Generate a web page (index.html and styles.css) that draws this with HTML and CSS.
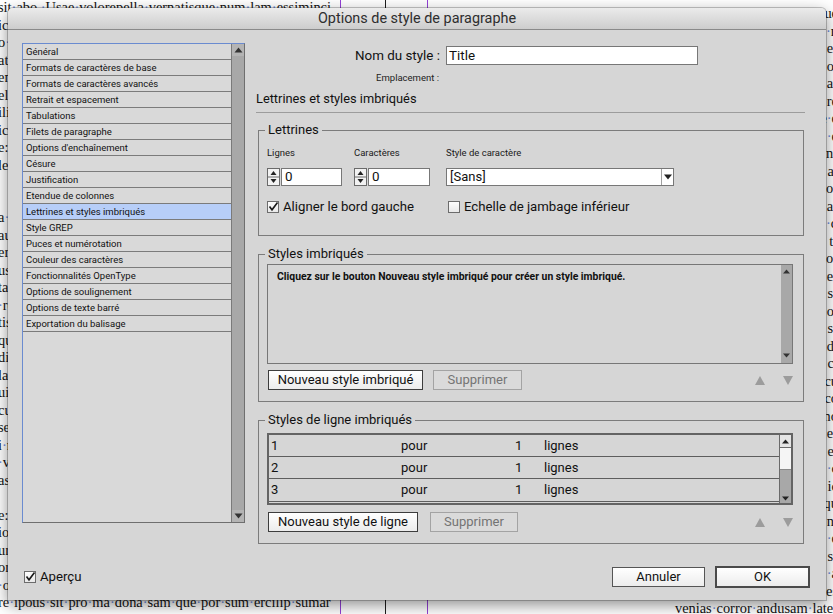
FILE: index.html
```html
<!DOCTYPE html>
<html lang="fr">
<head>
<meta charset="utf-8">
<title>Options de style de paragraphe</title>
<link rel="stylesheet" href="styles.css">
</head>
<body>
<div class="doc">
  <div class="col col-left">
    <p>sit<span class="s">·</span>abo.<span class="s">·</span>Usae<span class="s">·</span>volorepella<span class="s">·</span>vernatisque<span class="s">·</span>num<span class="s">·</span>lam<span class="s">·</span>essiminci.</p>
    <p>ici</p>
    <p>o<span class="s">·</span>e</p>
    <p>ate</p>
    <p>end</p>
    <p>ele</p>
    <p>ili</p>
    <p>ica</p>
    <p>e:</p>
    <p>les</p>
    <p>&nbsp;</p>
    <p>&nbsp;</p>
    <p>a<span class="s">·</span>q</p>
    <p>au</p>
    <p>erc</p>
    <p>usd</p>
    <p>tat</p>
    <p><span class="s">·</span>re</p>
    <p>tis</p>
    <p>qu</p>
    <p>dic</p>
    <p>lab</p>
    <p>uia</p>
    <p>cu</p>
    <p>seq</p>
    <p>i<span class="s">·</span>n</p>
    <p><span class="s">·</span>ve</p>
    <p>asp</p>
    <p>&nbsp;</p>
    <p>e:</p>
    <p>iot</p>
    <p>ure</p>
    <p>ori</p>
    <p><span class="s">·</span>od</p>
    <p>re<span class="s">·</span>ipous<span class="s">·</span>sit<span class="s">·</span>pro<span class="s">·</span>ma<span class="s">·</span>dona<span class="s">·</span>sam<span class="s">·</span>que<span class="s">·</span>por<span class="s">·</span>sum<span class="s">·</span>ercilip<span class="s">·</span>sumar</p>
  </div>
  <div class="rule rule-purple"></div>
  <div class="gap-a"></div>
  <div class="rule rule-black"></div>
  <div class="gap-b"></div>
  <div class="rule rule-purple"></div>
  <div class="col col-right">
    <p>ue</p>
    <p><span class="s">·</span>n</p>
    <p>e<span class="s">·</span></p>
    <p>ol</p>
    <p>ar</p>
    <p>re</p>
    <p>e<span class="s">·</span>e</p>
    <p><span class="s">·</span>e</p>
    <p>n<span class="s">·</span></p>
    <p>at</p>
    <p>or</p>
    <p>ar</p>
    <p><span class="s">·</span>q</p>
    <p>t<span class="s">·</span></p>
    <p>or</p>
    <p>e<span class="s">·</span></p>
    <p>s<span class="s">·</span></p>
    <p>oi</p>
    <p>s<span class="s">·</span></p>
    <p>di</p>
    <p>ct</p>
    <p>cu</p>
    <p>co</p>
    <p>mo</p>
    <p>e<span class="s">·</span></p>
    <p>et</p>
    <p><span class="s">·</span>c</p>
    <p>ic</p>
    <p>qu</p>
    <p>ni</p>
    <p><span class="s">·</span>e</p>
    <p>s<span class="s">·</span></p>
    <p><span class="s">·</span>a</p>
    <p>es</p>
    <p>venias<span class="s">·</span>corror<span class="s">·</span>andusam<span class="s">·</span>later</p>
  </div>
</div>

<div class="dialog">
  <div class="titlebar">Options de style de paragraphe</div>

  <div class="content">
    <div class="catlist">
      <ul class="cats">
        <li>Général</li>
        <li>Formats de caractères de base</li>
        <li>Formats de caractères avancés</li>
        <li>Retrait et espacement</li>
        <li>Tabulations</li>
        <li>Filets de paragraphe</li>
        <li>Options d'enchaînement</li>
        <li>Césure</li>
        <li>Justification</li>
        <li>Etendue de colonnes</li>
        <li class="sel">Lettrines et styles imbriqués</li>
        <li>Style GREP</li>
        <li>Puces et numérotation</li>
        <li>Couleur des caractères</li>
        <li>Fonctionnalités OpenType</li>
        <li>Options de soulignement</li>
        <li>Options de texte barré</li>
        <li>Exportation du balisage</li>
      </ul>
      <div class="vscroll">
        <div class="vs-btn"><svg width="9" height="6" viewBox="0 0 9 6"><polygon points="0.5,5.5 8.5,5.5 4.5,0.5" fill="#333"/></svg></div>
        <div class="vs-track"></div>
        <div class="vs-btn"><svg width="9" height="6" viewBox="0 0 9 6"><polygon points="0.5,0.5 8.5,0.5 4.5,5.5" fill="#333"/></svg></div>
      </div>
    </div>

    <div class="panel">
      <div class="name-row">
        <span class="name-label">Nom du style :</span>
        <div class="textbox name-box">Title</div>
      </div>
      <div class="loc-row"><span>Emplacement :</span></div>
      <h2 class="section-title">Lettrines et styles imbriqués</h2>
      <hr class="sep">

      <fieldset class="group g-drop">
        <legend>Lettrines</legend>
        <div class="drop-body">
          <div class="drop-grid">
            <span class="small">Lignes</span>
            <span class="small">Caractères</span>
            <span class="small">Style de caractère</span>
            <div class="spinner">
              <svg class="spin" width="13" height="18" viewBox="0 0 13 18"><rect x="0.5" y="0.5" width="12" height="17" fill="#f2f2f2" stroke="#6a6a6a"/><line x1="1" y1="9" x2="12" y2="9" stroke="#6a6a6a"/><polygon points="3.5,7 9.5,7 6.5,3" fill="#222"/><polygon points="3.5,11 9.5,11 6.5,15" fill="#222"/></svg>
              <div class="textbox num w61">0</div>
            </div>
            <div class="spinner">
              <svg class="spin" width="13" height="18" viewBox="0 0 13 18"><rect x="0.5" y="0.5" width="12" height="17" fill="#f2f2f2" stroke="#6a6a6a"/><line x1="1" y1="9" x2="12" y2="9" stroke="#6a6a6a"/><polygon points="3.5,7 9.5,7 6.5,3" fill="#222"/><polygon points="3.5,11 9.5,11 6.5,15" fill="#222"/></svg>
              <div class="textbox num w62">0</div>
            </div>
            <div class="select">
              <span class="select-val">[Sans]</span>
              <span class="select-arrow"><svg width="8" height="6" viewBox="0 0 8 6"><polygon points="0,0.5 8,0.5 4,5.5" fill="#222"/></svg></span>
            </div>
          </div>
          <div class="check-row">
            <span class="check"><span class="cb"><svg width="12" height="12" viewBox="0 0 12 12"><path d="M2.5 5.5 L5 8.8 L10.5 1.5" fill="none" stroke="#1a1a1a" stroke-width="1.6"/></svg></span>Aligner le bord gauche</span>
            <span class="check"><span class="cb"></span>Echelle de jambage inférieur</span>
          </div>
        </div>
      </fieldset>

      <fieldset class="group g-nested">
        <legend>Styles imbriqués</legend>
        <div class="g-body">
          <div class="listbox">
            <div class="listbox-msg">Cliquez sur le bouton Nouveau style imbriqué pour créer un style imbriqué.</div>
            <div class="mini-scroll">
              <svg width="7" height="5" viewBox="0 0 7 5"><polygon points="0,4.5 7,4.5 3.5,0.5" fill="#333"/></svg>
              <svg width="7" height="5" viewBox="0 0 7 5"><polygon points="0,0.5 7,0.5 3.5,4.5" fill="#333"/></svg>
            </div>
          </div>
          <div class="btn-row">
            <button class="btn w155">Nouveau style imbriqué</button>
            <button class="btn off w89">Supprimer</button>
            <span class="order">
              <svg width="10" height="9" viewBox="0 0 10 9"><polygon points="0,9 10,9 5,0" fill="#9c9c9c"/></svg>
              <svg width="10" height="9" viewBox="0 0 10 9"><polygon points="0,0 10,0 5,9" fill="#9c9c9c"/></svg>
            </span>
          </div>
        </div>
      </fieldset>

      <fieldset class="group g-lines">
        <legend>Styles de ligne imbriqués</legend>
        <div class="g-body">
          <div class="table">
            <div class="rows">
              <div class="trow"><span>1</span><span>pour</span><span>1</span><span>lignes</span></div>
              <div class="trow"><span>2</span><span>pour</span><span>1</span><span>lignes</span></div>
              <div class="trow"><span>3</span><span>pour</span><span>1</span><span>lignes</span></div>
            </div>
            <div class="tscroll">
              <div class="ts-up"><svg width="7" height="5" viewBox="0 0 7 5"><polygon points="0,4.5 7,4.5 3.5,0.5" fill="#222"/></svg></div>
              <div class="ts-thumb"></div>
              <div class="ts-track"></div>
              <div class="ts-down"><svg width="7" height="5" viewBox="0 0 7 5"><polygon points="0,0.5 7,0.5 3.5,4.5" fill="#222"/></svg></div>
            </div>
          </div>
          <div class="btn-row row2">
            <button class="btn w150">Nouveau style de ligne</button>
            <button class="btn off w88">Supprimer</button>
            <span class="order">
              <svg width="10" height="9" viewBox="0 0 10 9"><polygon points="0,9 10,9 5,0" fill="#9c9c9c"/></svg>
              <svg width="10" height="9" viewBox="0 0 10 9"><polygon points="0,0 10,0 5,9" fill="#9c9c9c"/></svg>
            </span>
          </div>
        </div>
      </fieldset>
    </div>
  </div>

  <div class="footer">
    <span class="check preview"><span class="cb"><svg width="12" height="12" viewBox="0 0 12 12"><path d="M2.5 5.5 L5 8.8 L10.5 1.5" fill="none" stroke="#1a1a1a" stroke-width="1.6"/></svg></span>Aperçu</span>
    <button class="btn cancel">Annuler</button>
    <button class="btn ok">OK</button>
  </div>
</div>
</body>
</html>
```
FILE: styles.css
```css
* { box-sizing: border-box; }
html, body { margin: 0; padding: 0; }
body {
  width: 833px;
  height: 614px;
  overflow: hidden;
  position: relative;
  background: #ffffff;
  font-family: Roboto, "Noto Sans", "DejaVu Sans", sans-serif;
  color: #111;
}

/* background document */
.doc {
  display: flex;
  width: 841px;
  height: 614px;
  font-family: "Liberation Serif", "Times New Roman", serif;
  font-size: 14.4px;
  line-height: 17.5px;
  color: #111;
}
.doc p { margin: 0; height: 17.5px; white-space: nowrap; }
.doc .s { color: #6b8ee0; }
.col-left { width: 340px; margin-top: -1px; overflow: hidden; text-indent: -2px; }
.col-right { width: 410px; padding-top: 5px; text-align: right; }
.rule { width: 1px; flex: none; }
.rule-purple { background: #9441d8; }
.rule-black { background: #1e1e1e; }
.gap-a { width: 44px; flex: none; }
.gap-b { width: 41px; flex: none; }

/* dialog window */
.dialog {
  position: absolute;
  left: 8px;
  top: 8px;
  width: 818px;
  height: 592px;
  background: #d6d6d6;
  border-radius: 5px 5px 0 0;
  box-shadow: 0 0 0 1px rgba(0,0,0,0.22), 0 5px 16px rgba(0,0,0,0.45);
  display: flex;
  flex-direction: column;
}
.titlebar {
  height: 22px;
  flex: none;
  background: linear-gradient(#ebebeb, #cdcdcd);
  border-bottom: 1px solid #8a8a8a;
  border-radius: 5px 5px 0 0;
  text-align: center;
  font-size: 14.4px;
  line-height: 22px;
  color: #2e2e2e;
}
.content {
  display: grid;
  grid-template-columns: 223px 549px;
  column-gap: 11px;
  padding: 13px 0 0 14px;
}

/* category list */
.catlist {
  height: 480px;
  display: flex;
  border: 1px solid #6f6f6f;
  border-left-color: #6a8bd0;
  border-top-color: #6a8bd0;
}
.cats {
  list-style: none;
  margin: 0;
  padding: 0;
  flex: 1;
  background: #d9d9d9;
}
.cats li {
  height: 16px;
  border-bottom: 1px solid #7b7b7b;
  padding-left: 3px;
  font-size: 9.5px;
  line-height: 16px;
  white-space: nowrap;
  color: #111;
}
.cats li.sel { background: #b7cef8; }
.vscroll {
  width: 13px;
  flex: none;
  display: flex;
  flex-direction: column;
  background: #a8a8a8;
  border-left: 1px solid #7a7a7a;
}
.vs-btn {
  height: 12px;
  display: flex;
  align-items: center;
  justify-content: center;
  background: #b4b4b4;
}
.vs-track { flex: 1; }

/* right panel */
.panel { display: flex; flex-direction: column; }
.name-row {
  display: grid;
  grid-template-columns: 184px 252px;
  column-gap: 6px;
  align-items: center;
  margin-top: 3px;
}
.name-label { text-align: right; font-size: 13.4px; line-height: 16px; }
.textbox {
  background: #ffffff;
  border: 1px solid #777;
  height: 19px;
  font-size: 13.4px;
  line-height: 17px;
  padding-left: 2px;
  color: #111;
}
.loc-row {
  display: grid;
  grid-template-columns: 183px;
  margin-top: 6px;
  font-size: 9.5px;
  line-height: 14px;
  text-align: right;
  color: #222;
}
.section-title {
  margin: 6px 0 0;
  font-size: 12.8px;
  font-weight: normal;
  line-height: 16px;
}
.sep {
  margin: 5px 0 0;
  border: 0;
  height: 1px;
  background: #9c9c9c;
}

/* group boxes */
.group {
  margin: 9px 1px 0 2px;
  padding: 0;
  border: 1px solid #7c7c7c;
  min-width: 0;
}
.group legend {
  margin-left: 6px;
  padding: 0 3px;
  font-size: 13px;
  line-height: 16px;
}
.g-nested { margin-top: 10px; }
.g-lines { margin-top: 10px; }

.drop-body { padding: 9px 0 20px 8px; }
.drop-grid {
  display: grid;
  grid-template-columns: 87px 92px 228px;
  grid-template-rows: 12px 18px;
  row-gap: 9px;
}
.small { font-size: 9.5px; line-height: 12px; color: #1a1a1a; }
.spinner { display: flex; gap: 1px; }
.spin { display: block; flex: none; }
.num { height: 18px; line-height: 16px; padding-left: 3px; }
.w61 { width: 61px; }
.w62 { width: 62px; }
.select {
  display: flex;
  height: 18px;
  background: #fff;
  border: 1px solid #777;
  font-size: 13px;
  line-height: 16px;
}
.select-val { flex: 1; padding-left: 3px; }
.select-arrow {
  width: 12px;
  border-left: 1px solid #a0a0a0;
  display: flex;
  align-items: center;
  justify-content: center;
}
.check-row {
  display: grid;
  grid-template-columns: 181px auto;
  margin-top: 13px;
}
.check {
  display: flex;
  align-items: center;
  font-size: 13.2px;
  line-height: 16px;
  white-space: nowrap;
}
.cb {
  width: 12px;
  height: 12px;
  flex: none;
  margin-right: 4px;
  border: 1px solid #6c6c6c;
  background: linear-gradient(#fdfdfd, #e9e9e9);
  position: relative;
}
.cb svg { position: absolute; left: -1px; top: -1px; }

.g-body { padding: 2px 10px 11px 8px; }
.listbox {
  height: 100px;
  display: flex;
  border: 1px solid #777;
}
.listbox-msg {
  flex: 1;
  padding: 6px 0 0 9px;
  font-size: 10.4px;
  line-height: 12px;
  font-weight: bold;
  color: #111;
}
.mini-scroll {
  width: 11px;
  flex: none;
  background: #a8a8a8;
  display: flex;
  flex-direction: column;
  justify-content: space-between;
  align-items: center;
  padding: 4px 0 5px;
}
.btn-row {
  display: flex;
  align-items: center;
  margin-top: 6px;
  padding-left: 1px;
}
.btn {
  font-family: inherit;
  font-size: 13px;
  height: 20px;
  padding: 0;
  margin: 0;
  border: 1px solid #3d3d3d;
  border-radius: 0;
  background: linear-gradient(#ffffff, #ececec);
  color: #111;
  line-height: 18px;
}
.btn.off {
  border-color: #a3a3a3;
  background: #dadada;
  color: #747474;
  margin-left: 10px;
}
.w155 { width: 155px; }
.w89 { width: 89px; }
.w150 { width: 150px; }
.w88 { width: 88px; }
.row2 .btn.off { margin-left: 12px; }
.order {
  margin-left: auto;
  display: flex;
  gap: 18px;
}
.order svg { display: block; }

.table {
  margin-top: 3px;
  height: 72px;
  display: flex;
  border: 2px solid #646464;
}
.rows { flex: 1; }
.trow {
  height: 22px;
  border-bottom: 1px solid #5e5e5e;
  display: grid;
  grid-template-columns: 130px 114px 29px auto;
  padding-left: 2px;
  font-size: 13px;
  line-height: 21px;
}
.trow:nth-child(3) { height: 23px; line-height: 22px; }
.tscroll {
  width: 12px;
  flex: none;
  display: flex;
  flex-direction: column;
  border-left: 1px solid #6a6a6a;
  background: #a8a8a8;
}
.ts-up {
  height: 13px;
  background: #e4e4e4;
  border-bottom: 1px solid #6a6a6a;
  display: flex;
  align-items: center;
  justify-content: center;
}
.ts-thumb { height: 22px; background: #f5f5f5; border-bottom: 1px solid #8a8a8a; }
.ts-track { flex: 1; }
.ts-down {
  height: 10px;
  display: flex;
  align-items: center;
  justify-content: center;
}
.row2 { margin-top: 7px; }

/* footer */
.footer {
  margin-top: auto;
  display: flex;
  align-items: center;
  padding: 0 16px 12px 16px;
  height: 34px;
}
.preview .cb { margin-right: 4px; }
.cancel { margin-left: auto; width: 93px; height: 20px; border-color: #555; }
.ok {
  margin-left: 10px;
  width: 95px;
  height: 22px;
  border: 2px solid #4a4a4a;
  line-height: 18px;
}
```
